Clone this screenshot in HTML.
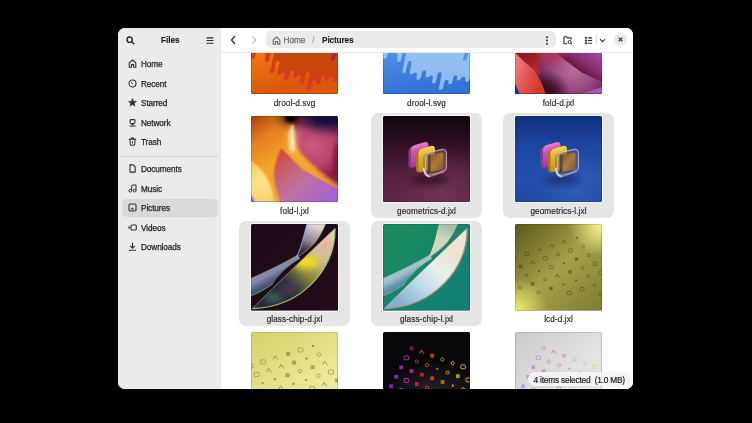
<!DOCTYPE html>
<html><head><meta charset="utf-8">
<style>
html,body{margin:0;padding:0;width:752px;height:423px;background:#000;overflow:hidden}
body{font-family:"Liberation Sans",sans-serif;color:#2e2e32;position:relative}
.win{will-change:transform;position:absolute;left:118px;top:28px;width:515px;height:360.8px;border-radius:7px;overflow:hidden;background:#fff}
.side{position:absolute;left:0;top:0;width:103px;height:100%;background:#ebebed}
.content{position:absolute;left:103px;top:0;width:412px;height:100%;background:#fff;overflow:hidden}
.abs{position:absolute}
.t{position:absolute;white-space:nowrap;font-size:8px;line-height:10px}
.si{position:absolute;left:0;width:103px;height:19px}
.si svg{position:absolute;left:10.2px;top:5.2px}
.si span{position:absolute;left:23px;top:6.2px;font-size:8.2px;line-height:10px;color:#242428;-webkit-text-stroke:0.25px #242428;letter-spacing:-0.08px}
.hdr{position:absolute;left:0;top:0;width:412px;height:24px;background:#fff;border-bottom:1px solid #e6e6e6;z-index:5}
.sel{position:absolute;width:111px;height:105.2px;background:#e5e5e5;border-radius:7px}
.thumb{position:absolute;width:87px;height:86.5px;overflow:hidden;border-radius:1.5px;box-shadow:0 0 0 1px rgba(255,255,255,0.6)}
.thumb::after{content:"";position:absolute;left:0;top:0;right:0;bottom:0;border-radius:1.5px;box-shadow:inset 0 0 0 0.6px rgba(0,0,0,0.25)}
.thumb svg{display:block;width:87px;height:86.5px}
.lbl{position:absolute;width:120px;text-align:center;font-size:8.2px;letter-spacing:0.1px;line-height:10px;color:#242428;-webkit-text-stroke:0.15px #242428;white-space:nowrap}
</style></head><body>
<div class="win">
  <div class="side">
    <svg class="abs" style="left:7.8px;top:7.8px" width="9" height="9" viewBox="0 0 9 9"><circle cx="3.7" cy="3.7" r="2.7" fill="none" stroke="#242428" stroke-width="1.35"/><path d="M5.7 5.7L7.8 7.8" stroke="#242428" stroke-width="1.4" stroke-linecap="round"/></svg>
    <div class="t" style="left:43px;top:7.6px;font-weight:700;font-size:8.2px;color:#202024;-webkit-text-stroke:0.15px #202024">Files</div>
    <svg class="abs" style="left:87.8px;top:8.6px" width="8" height="7" viewBox="0 0 8 7"><path d="M0.6 0.8H7.4M0.6 3.5H7.4M0.6 6.2H7.4" stroke="#242428" stroke-width="1.15"/></svg>

    <div class="si" style="top:26px"><svg width="9" height="9" viewBox="0 0 9 9"><path d="M1.2 8.2V3.8L4.5 1L7.8 3.8V8.2H5.6V5.6H3.4V8.2Z" fill="none" stroke="#2e2e32" stroke-width="1.1" stroke-linejoin="round"/></svg><span>Home</span></div>
    <div class="si" style="top:45.5px"><svg width="9" height="9" viewBox="0 0 9 9"><circle cx="4.5" cy="4.5" r="3.5" fill="none" stroke="#2e2e32" stroke-width="1.1"/><path d="M4.6 4.7L3.1 3.3" fill="none" stroke="#2e2e32" stroke-width="1" stroke-linecap="round"/></svg><span>Recent</span></div>
    <div class="si" style="top:65px"><svg width="9" height="9" viewBox="0 0 9 9"><path d="M4.50 0.35 L5.59 3.25 L8.68 3.39 L6.26 5.32 L7.09 8.31 L4.50 6.60 L1.91 8.31 L2.74 5.32 L0.32 3.39 L3.41 3.25Z" fill="#2e2e32" stroke="#2e2e32" stroke-width="0.4" stroke-linejoin="round"/></svg><span>Starred</span></div>
    <div class="si" style="top:84.5px"><svg width="9" height="9" viewBox="0 0 9 9"><rect x="2.1" y="1.6" width="4.8" height="3.9" rx="0.9" fill="none" stroke="#2e2e32" stroke-width="1.1"/><path d="M3.6 5.6L3.2 7.3H5.8L5.4 5.6Z" fill="#2e2e32"/><path d="M1.4 8.1H7.6" stroke="#2e2e32" stroke-width="1"/></svg><span>Network</span></div>
    <div class="si" style="top:104px"><svg width="9" height="9" viewBox="0 0 9 9"><path d="M0.8 2.3H8.2M3.3 2.2V1.1H5.7V2.2M1.9 2.6L2.3 7.4Q2.4 8.3 3.3 8.3H5.7Q6.6 8.3 6.7 7.4L7.1 2.6M4.5 4.2V6.6" fill="none" stroke="#2e2e32" stroke-width="1.05" stroke-linejoin="round"/></svg><span>Trash</span></div>
    <div class="abs" style="left:3px;top:127.5px;width:97px;height:1px;background:#d8d8da"></div>
    <div class="si" style="top:131px"><svg width="9" height="9" viewBox="0 0 9 9"><path d="M2 0.9H5.3L7.2 2.8V8.1H2Z" fill="none" stroke="#2e2e32" stroke-width="1.1" stroke-linejoin="round"/></svg><span>Documents</span></div>
    <div class="si" style="top:150.5px"><svg width="9" height="9" viewBox="0 0 9 9"><circle cx="2.3" cy="6.6" r="1.4" fill="none" stroke="#2e2e32" stroke-width="1"/><circle cx="6.6" cy="6.6" r="1.4" fill="none" stroke="#2e2e32" stroke-width="1"/><path d="M3.7 6.6V1.2L8 0.9V6.6" fill="none" stroke="#2e2e32" stroke-width="1"/></svg><span>Music</span></div>
    <div class="abs" style="left:4px;top:170.5px;width:96px;height:18.5px;background:#d9d9db;border-radius:5px"></div>
    <div class="si" style="top:170px"><svg width="9" height="9" viewBox="0 0 9 9"><rect x="1" y="1" width="7" height="7" rx="1.2" fill="none" stroke="#2e2e32" stroke-width="1.1"/><path d="M2.6 6.4L4.2 4.6L6.4 6.4Z" fill="#2e2e32"/></svg><span>Pictures</span></div>
    <div class="si" style="top:189.5px"><svg width="9" height="9" viewBox="0 0 9 9"><path d="M0.5 2.8L2.3 4.5L0.5 6.2Z" fill="#2e2e32"/><rect x="3" y="2" width="5.3" height="5" rx="1" fill="none" stroke="#2e2e32" stroke-width="1.1"/></svg><span>Videos</span></div>
    <div class="si" style="top:209px"><svg width="9" height="9" viewBox="0 0 9 9"><path d="M4.5 0.6V6M2.2 3.8L4.5 6.1L6.8 3.8M1 8.2H8" fill="none" stroke="#2e2e32" stroke-width="1.1"/></svg><span>Downloads</span></div>
  </div>
  <div class="content">
    <div class="hdr">
      <div class="abs" style="left:44.5px;top:3.3px;width:290px;height:17.2px;background:#ebebeb;border-radius:5px"></div>
      <div class="t" style="left:62.5px;top:7.6px;font-size:8.2px;color:#6a6a6e;-webkit-text-stroke:0.25px #6a6a6e">Home</div>
      <div class="t" style="left:91.3px;top:7.6px;font-size:8.2px;color:#8a8a8d">/</div>
      <div class="t" style="left:101px;top:7.4px;font-weight:700;font-size:8.3px;letter-spacing:-0.15px;color:#202024;-webkit-text-stroke:0.1px #202024">Pictures</div>
      <svg class="abs" style="left:9px;top:7px" width="7" height="10" viewBox="0 0 7 10"><path d="M5 1L1.5 5L5 9" fill="none" stroke="#2e2e32" stroke-width="1.3"/></svg>
      <svg class="abs" style="left:30px;top:7px" width="7" height="10" viewBox="0 0 7 10"><path d="M1.5 1.5L4.8 5L1.5 8.5" fill="none" stroke="#9a9a9d" stroke-width="1"/></svg>
      <svg class="abs" style="left:51px;top:7.5px" width="9" height="9" viewBox="0 0 9 9"><path d="M1.2 8.2V3.8L4.5 1L7.8 3.8V8.2H5.6V5.6H3.4V8.2Z" fill="none" stroke="#6a6a6e" stroke-width="1.1" stroke-linejoin="round"/></svg>
      <svg class="abs" style="left:324px;top:8px" width="4" height="9" viewBox="0 0 4 9"><circle cx="2" cy="1.2" r="1" fill="#2e2e32"/><circle cx="2" cy="4.5" r="1" fill="#2e2e32"/><circle cx="2" cy="7.8" r="1" fill="#2e2e32"/></svg>
      <svg class="abs" style="left:342px;top:8px" width="10" height="9" viewBox="0 0 10 9"><path d="M4.2 7.8H1.6Q0.9 7.8 0.9 7.1V1.5Q0.9 0.8 1.6 0.8H3.6L4.6 1.9H7.6Q8.3 1.9 8.3 2.6V3.6" fill="none" stroke="#2e2e32" stroke-width="1.1"/><circle cx="6.6" cy="6" r="1.5" fill="none" stroke="#2e2e32" stroke-width="1"/><path d="M7.7 7.1L8.9 8.3" stroke="#2e2e32" stroke-width="1.1"/></svg>
      <svg class="abs" style="left:363px;top:8px" width="9" height="9" viewBox="0 0 9 9"><rect x="0.9" y="0.9" width="1.9" height="1.9" rx="0.5" fill="#242428"/><rect x="0.9" y="3.6" width="1.9" height="1.9" rx="0.5" fill="#242428"/><rect x="0.9" y="6.3" width="1.9" height="1.9" rx="0.5" fill="#242428"/><path d="M3.9 1.85H8.1M3.9 4.55H8.1M3.9 7.25H8.1" stroke="#242428" stroke-width="1.05"/></svg>
      <div class="abs" style="left:374.9px;top:6.6px;width:1px;height:10.8px;background:#dcdcdc"></div>
      <svg class="abs" style="left:377.9px;top:9.8px" width="7" height="5" viewBox="0 0 7 5"><path d="M1 1.2L3.5 3.7L6 1.2" fill="none" stroke="#2e2e32" stroke-width="1.1"/></svg>
      <div class="abs" style="left:393.1px;top:5.4px;width:12.6px;height:12.6px;border-radius:50%;background:#ebebeb"></div>
      <svg class="abs" style="left:397px;top:9.3px" width="5" height="5" viewBox="0 0 5 5"><path d="M0.6 0.6L4.4 4.4M4.4 0.6L0.6 4.4" stroke="#2e2e32" stroke-width="1.2"/></svg>
    </div>
    <div id="grid" class="abs" style="left:0;top:0;width:412px;height:360px">
<div class="thumb" style="left:30px;top:-20.30px"><svg viewBox="0 0 87 87" preserveAspectRatio="none"><defs><linearGradient id="ab" gradientUnits="userSpaceOnUse" x1="0" y1="45" x2="10" y2="87"><stop offset="0" stop-color="#f27812"/><stop offset="1" stop-color="#d9580a"/></linearGradient><linearGradient id="at" gradientUnits="userSpaceOnUse" x1="0" y1="40" x2="0" y2="84"><stop offset="0" stop-color="#c44808"/><stop offset="0.4" stop-color="#c8460a"/><stop offset="0.7" stop-color="#d03c14"/><stop offset="1" stop-color="#dc3420"/></linearGradient><filter id="atb" x="-100%" y="-100%" width="300%" height="300%"><feGaussianBlur stdDeviation="0.9"/></filter></defs><rect width="87" height="87" fill="url(#ab)"/><g transform="skewX(-11.31)"><path d="M-20,-10 L-20,49 L9.60,49.00 A2.00,2.00 0 0 0 13.60,49.00 L17.30,32.20 A2.20,2.20 0 0 1 21.70,32.20 L24.75,52.35 A1.85,1.85 0 0 0 28.45,52.35 L28.55,46.55 A1.75,1.75 0 0 1 32.05,46.55 L32.05,63.65 A1.75,1.75 0 0 0 35.55,63.65 L35.70,54.90 A1.90,1.90 0 0 1 39.50,54.90 L39.75,64.85 A1.85,1.85 0 0 0 43.45,64.85 L43.45,66.65 A1.85,1.85 0 0 1 47.15,66.65 L47.45,70.15 A2.15,2.15 0 0 0 51.75,70.15 L51.90,65.00 A2.10,2.10 0 0 1 56.10,65.00 L56.35,67.95 A1.85,1.85 0 0 0 60.05,67.95 L60.05,69.75 A1.85,1.85 0 0 1 63.75,69.75 L63.90,74.00 A2.00,2.00 0 0 0 67.90,74.00 L67.90,66.50 A2.00,2.00 0 0 1 71.90,66.50 L72.05,80.25 A2.05,2.05 0 0 0 76.15,80.25 L76.15,74.35 A2.05,2.05 0 0 1 80.25,74.35 L80.35,74.75 A1.95,1.95 0 0 0 84.25,74.75 L84.30,69.80 A1.90,1.90 0 0 1 88.10,69.80 L88.10,71.10 A1.90,1.90 0 0 0 91.90,71.10 L92.25,71.35 A2.15,2.15 0 0 1 96.55,71.35 L96.55,72.05 A2.15,2.15 0 0 0 100.85,72.05 L101.00,62.00 A2.00,2.00 0 0 1 105.00,62.00 L130,60 L130,-10 Z" fill="url(#at)"/><line x1="95.5" y1="20" x2="92" y2="51.3" stroke="#a8283a" stroke-width="3.6" stroke-linecap="round"/><rect x="9.75" y="44.00" width="3.70" height="6.80" rx="1.85" fill="#e03424" fill-opacity="0.8" filter="url(#atb)"/><rect x="24.90" y="47.35" width="3.40" height="6.65" rx="1.70" fill="#e03424" fill-opacity="0.8" filter="url(#atb)"/><rect x="32.20" y="58.65" width="3.20" height="6.55" rx="1.60" fill="#e03424" fill-opacity="0.8" filter="url(#atb)"/><rect x="39.90" y="59.85" width="3.40" height="6.65" rx="1.70" fill="#e03424" fill-opacity="0.8" filter="url(#atb)"/><rect x="47.60" y="65.15" width="4.00" height="6.95" rx="2.00" fill="#e03424" fill-opacity="0.8" filter="url(#atb)"/><rect x="56.50" y="62.95" width="3.40" height="6.65" rx="1.70" fill="#e03424" fill-opacity="0.8" filter="url(#atb)"/><rect x="64.05" y="69.00" width="3.70" height="6.80" rx="1.85" fill="#e03424" fill-opacity="0.8" filter="url(#atb)"/><rect x="72.20" y="75.25" width="3.80" height="6.85" rx="1.90" fill="#e03424" fill-opacity="0.8" filter="url(#atb)"/><rect x="80.50" y="69.75" width="3.60" height="6.75" rx="1.80" fill="#e03424" fill-opacity="0.8" filter="url(#atb)"/><rect x="88.25" y="66.10" width="3.50" height="6.70" rx="1.75" fill="#e03424" fill-opacity="0.8" filter="url(#atb)"/><rect x="96.70" y="67.05" width="4.00" height="6.95" rx="2.00" fill="#e03424" fill-opacity="0.8" filter="url(#atb)"/></g><rect x="0" y="86" width="87" height="1" fill="#c84a0a"/></svg></div>
<div class="lbl" style="left:13.5px;top:70.50px">drool-d.svg</div>
<div class="thumb" style="left:162px;top:-20.30px"><svg viewBox="0 0 87 87" preserveAspectRatio="none"><defs><linearGradient id="bb" gradientUnits="userSpaceOnUse" x1="0" y1="45" x2="10" y2="87"><stop offset="0" stop-color="#4f8fe4"/><stop offset="1" stop-color="#3474d8"/></linearGradient><linearGradient id="bt" gradientUnits="userSpaceOnUse" x1="0" y1="40" x2="0" y2="84"><stop offset="0" stop-color="#96c2f4"/><stop offset="1" stop-color="#8ab6f0"/></linearGradient></defs><rect width="87" height="87" fill="url(#bb)"/><g transform="skewX(-11.31)"><path d="M-20,-10 L-20,49 L9.60,49.00 A2.00,2.00 0 0 0 13.60,49.00 L17.30,32.20 A2.20,2.20 0 0 1 21.70,32.20 L24.75,52.35 A1.85,1.85 0 0 0 28.45,52.35 L28.55,46.55 A1.75,1.75 0 0 1 32.05,46.55 L32.05,63.65 A1.75,1.75 0 0 0 35.55,63.65 L35.70,54.90 A1.90,1.90 0 0 1 39.50,54.90 L39.75,64.85 A1.85,1.85 0 0 0 43.45,64.85 L43.45,66.65 A1.85,1.85 0 0 1 47.15,66.65 L47.45,70.15 A2.15,2.15 0 0 0 51.75,70.15 L51.90,65.00 A2.10,2.10 0 0 1 56.10,65.00 L56.35,67.95 A1.85,1.85 0 0 0 60.05,67.95 L60.05,69.75 A1.85,1.85 0 0 1 63.75,69.75 L63.90,74.00 A2.00,2.00 0 0 0 67.90,74.00 L67.90,66.50 A2.00,2.00 0 0 1 71.90,66.50 L72.05,80.25 A2.05,2.05 0 0 0 76.15,80.25 L76.15,74.35 A2.05,2.05 0 0 1 80.25,74.35 L80.35,74.75 A1.95,1.95 0 0 0 84.25,74.75 L84.30,69.80 A1.90,1.90 0 0 1 88.10,69.80 L88.10,71.10 A1.90,1.90 0 0 0 91.90,71.10 L92.25,71.35 A2.15,2.15 0 0 1 96.55,71.35 L96.55,72.05 A2.15,2.15 0 0 0 100.85,72.05 L101.00,62.00 A2.00,2.00 0 0 1 105.00,62.00 L130,60 L130,-10 Z" fill="url(#bt)"/><line x1="95.5" y1="20" x2="92" y2="51.3" stroke="#5a96e6" stroke-width="3.6" stroke-linecap="round"/></g><rect x="0" y="86" width="87" height="1" fill="#2a62c8"/></svg></div>
<div class="lbl" style="left:145.5px;top:70.50px">drool-l.svg</div>
<div class="thumb" style="left:294px;top:-20.30px"><svg viewBox="0 0 87 87" preserveAspectRatio="none"><defs>
<filter id="fdb" x="-20%" y="-20%" width="140%" height="140%"><feGaussianBlur stdDeviation="0.7"/></filter>
<filter id="fdb2" x="-50%" y="-50%" width="200%" height="200%"><feGaussianBlur stdDeviation="2.5"/></filter>
<radialGradient id="fdm" gradientUnits="userSpaceOnUse" cx="58" cy="62" r="36"><stop offset="0" stop-color="#b87098"/><stop offset="0.55" stop-color="#9c4c84"/><stop offset="1" stop-color="#702860"/></radialGradient>
<radialGradient id="fdsh" gradientUnits="userSpaceOnUse" cx="30" cy="88" r="26"><stop offset="0" stop-color="#1a0410" stop-opacity="1"/><stop offset="0.5" stop-color="#3a0c24" stop-opacity="0.8"/><stop offset="1" stop-color="#3a0c24" stop-opacity="0"/></radialGradient>
<linearGradient id="fdtr" gradientUnits="userSpaceOnUse" x1="58" y1="62" x2="75" y2="38"><stop offset="0" stop-color="#5a1030"/><stop offset="0.45" stop-color="#8a3070"/><stop offset="1" stop-color="#9c4ca8"/></linearGradient>
<linearGradient id="fdl" gradientUnits="userSpaceOnUse" x1="0" y1="60" x2="28" y2="70"><stop offset="0" stop-color="#f07880"/><stop offset="0.45" stop-color="#e05850"/><stop offset="1" stop-color="#d03a2c"/></linearGradient>
<linearGradient id="fdtl" gradientUnits="userSpaceOnUse" x1="5" y1="45" x2="22" y2="62"><stop offset="0" stop-color="#8a1420"/><stop offset="1" stop-color="#b02a30"/></linearGradient>
</defs>
<rect width="87" height="87" fill="#a04a80"/>
<g filter="url(#fdb)">
<rect x="-5" y="-5" width="97" height="97" fill="url(#fdm)"/>
<ellipse cx="33" cy="48" rx="13" ry="9" fill="#b83050" opacity="0.65" filter="url(#fdb2)"/><rect x="-5" y="-5" width="97" height="97" fill="url(#fdsh)"/>
<path d="M22,44 Q24,52 23,60" fill="none" stroke="#d04050" stroke-width="2" opacity="0.6" filter="url(#fdb2)"/>
<path d="M92,90 L55,90 Q72,84 92,78 Z" fill="#a456c0"/>
<path d="M40.75,-5 L40.75,44.8 Q47,50 53.25,54.8 T67,64.8 Q78,70 92,76.5 L92,-5 Z" fill="url(#fdtr)"/>
<ellipse cx="45" cy="46" rx="6" ry="3" fill="#c83060" opacity="0.7" filter="url(#fdb2)"/>
<path d="M-5,-5 L-5,44 L0.6,45.4 Q9.6,55 19.2,62.5 L25,68 Q23.5,55 23,30 L23,-5 Z" fill="url(#fdtl)"/>
<path d="M-5,44 L0.6,45.4 Q9.6,55 19.2,62.5 Q25.6,71 31,87 L-5,87 Z" fill="url(#fdl)"/>
<path d="M-5,74 L0,76 Q3,82 6,90 L-5,90 Z" fill="#2420c8"/>
<rect x="0" y="86" width="87" height="1" fill="#5a1040" opacity="0.6"/>
</g></svg></div>
<div class="lbl" style="left:277.5px;top:70.50px">fold-d.jxl</div>
<div class="thumb" style="left:30px;top:87.90px"><svg viewBox="0 0 87 87" preserveAspectRatio="none"><defs>
<filter id="flb" x="-20%" y="-20%" width="140%" height="140%"><feGaussianBlur stdDeviation="0.8"/></filter>
<filter id="flb2" x="-50%" y="-50%" width="200%" height="200%"><feGaussianBlur stdDeviation="1.6"/></filter>
<filter id="flb3" x="-80%" y="-80%" width="260%" height="260%"><feGaussianBlur stdDeviation="5"/></filter>
<linearGradient id="flo" gradientUnits="userSpaceOnUse" x1="2" y1="0" x2="30" y2="45"><stop offset="0" stop-color="#a8440e"/><stop offset="0.45" stop-color="#e68020"/><stop offset="1" stop-color="#f4a62a"/></linearGradient>
<radialGradient id="flm" gradientUnits="userSpaceOnUse" cx="62" cy="30" r="34"><stop offset="0" stop-color="#cc5a82"/><stop offset="0.6" stop-color="#b8446c"/><stop offset="1" stop-color="#8a2040"/></radialGradient>
<linearGradient id="flf" gradientUnits="userSpaceOnUse" x1="26" y1="36" x2="70" y2="88"><stop offset="0" stop-color="#d04838"/><stop offset="0.3" stop-color="#c86070"/><stop offset="0.6" stop-color="#c070a0"/><stop offset="1" stop-color="#a464d0"/></linearGradient>
<linearGradient id="fly" gradientUnits="userSpaceOnUse" x1="0" y1="45" x2="15" y2="85"><stop offset="0" stop-color="#f8c858"/><stop offset="0.5" stop-color="#fce28a"/><stop offset="1" stop-color="#fad070"/></linearGradient>
<linearGradient id="flband" gradientUnits="userSpaceOnUse" x1="40" y1="30" x2="80" y2="70"><stop offset="0" stop-color="#f8b438"/><stop offset="0.6" stop-color="#f4a030"/><stop offset="1" stop-color="#e88030"/></linearGradient>
</defs>
<rect width="87" height="87" fill="url(#flo)"/>
<g filter="url(#flb)">
<path d="M36,15 C40,35 46,45 55,52 C65,60 78,68 92,76 L92,60 C70,50 55,40 36,15 Z" fill="url(#flband)"/>
<path d="M42,-5 L42.5,10 C43.5,25 46,34 52,40 C62,50 75,62 92,72 L92,-5 Z" fill="url(#flm)" filter="url(#flb2)"/>
<ellipse cx="76" cy="3" rx="24" ry="11" fill="#161040" filter="url(#flb3)"/>
<ellipse cx="86" cy="45" rx="4" ry="18" fill="#801030" opacity="0.7" filter="url(#flb2)"/>
<ellipse cx="41" cy="2" rx="12" ry="6" fill="#1a0c18" filter="url(#flb3)"/><ellipse cx="40" cy="3" rx="6" ry="4" fill="#0c0610" filter="url(#flb2)"/>
<ellipse cx="42" cy="22" rx="3.5" ry="12" fill="#f8c878" opacity="0.7" filter="url(#flb3)"/><ellipse cx="41" cy="24" rx="2.3" ry="13" fill="#fff0c0" filter="url(#flb2)"/>
<path d="M41.8,9 C40.5,18 40.5,26 42,34" fill="none" stroke="#fffbe8" stroke-width="1.2" opacity="0.85"/>
<path d="M-5,44 L0.8,45.5 C9,51 16,60 19.5,70 C21.5,76 22.5,82 24,92 L-5,92 Z" fill="url(#fly)"/>
<path d="M30.3,32.2 C27,38 23,50 22.9,57 C23,66 25,75 31.3,92 L92,92 L92,75 C75,68 60,58 52.8,54.6 C45,48 38,40 30.3,32.2 Z" fill="url(#flf)"/>
<path d="M-5,76 C0,78 3,82 5,92 L-5,92 Z" fill="#8848d8"/>
<rect x="0" y="86" width="87" height="1" fill="#9050c0" opacity="0.5"/>
</g></svg></div>
<div class="lbl" style="left:13.5px;top:178.70px">fold-l.jxl</div>
<div class="sel" style="left:150px;top:84.60px"></div>
<div class="thumb" style="left:162px;top:87.90px"><svg viewBox="0 0 87 87" preserveAspectRatio="none"><defs>
<linearGradient id="gdbg" x1="0" y1="0" x2="0" y2="1"><stop offset="0" stop-color="#120610"/><stop offset="0.3" stop-color="#2e0e22"/><stop offset="0.65" stop-color="#52203e"/><stop offset="1" stop-color="#62284a"/></linearGradient>
<radialGradient id="gdgl" gradientUnits="userSpaceOnUse" cx="60" cy="75" r="45"><stop offset="0" stop-color="#8a4a6a" stop-opacity="0.35"/><stop offset="1" stop-color="#8a4a6a" stop-opacity="0"/></radialGradient>
<filter id="gdb1" x="-50%" y="-50%" width="200%" height="200%"><feGaussianBlur stdDeviation="3"/></filter>
<filter id="gdb0" x="-20%" y="-20%" width="140%" height="140%"><feGaussianBlur stdDeviation="0.5"/></filter>
<linearGradient id="gdpk" x1="0" y1="0" x2="0" y2="1"><stop offset="0" stop-color="#ec80cc"/><stop offset="0.3" stop-color="#cc54ac"/><stop offset="1" stop-color="#a83c90"/></linearGradient>
<linearGradient id="gdyl" x1="0" y1="0" x2="0" y2="1"><stop offset="0" stop-color="#f2d850"/><stop offset="0.3" stop-color="#e0b82e"/><stop offset="1" stop-color="#c09420"/></linearGradient>
<linearGradient id="gdgs" x1="0" y1="0" x2="1" y2="1"><stop offset="0" stop-color="#7a5030"/><stop offset="0.5" stop-color="#b08030"/><stop offset="1" stop-color="#8a5a30"/></linearGradient>
</defs>
<rect width="87" height="87" fill="url(#gdbg)"/>
<rect width="87" height="87" fill="url(#gdgl)"/>
<ellipse cx="47" cy="64" rx="18" ry="5" fill="#1a0610" opacity="0.55" filter="url(#gdb1)"/>
<g filter="url(#gdb0)">
<g transform="translate(25.5,31.5) skewY(-17)"><rect width="19.5" height="22" rx="4.5" fill="#8a3890"/></g>
<g transform="translate(28,30.5) skewY(-17)"><rect width="17.5" height="22" rx="4" fill="url(#gdpk)"/></g>
<g transform="translate(33,35) skewY(-17)"><rect width="18.5" height="23" rx="4.5" fill="#a87818"/></g>
<g transform="translate(35.5,34) skewY(-17)"><rect width="16.5" height="23" rx="4" fill="url(#gdyl)"/></g>
<g transform="translate(40,38) skewY(-13)"><rect width="23" height="24" rx="5" fill="#6a4a50" opacity="0.35"/></g>
<g transform="translate(42,37) skewY(-13)"><rect x="0.6" y="0.6" width="20.8" height="23" rx="4.5" fill="#8a6070" fill-opacity="0.35" stroke="#f0d8d0" stroke-width="1.3" stroke-opacity="0.6"/>
<rect x="4.5" y="3.5" width="14" height="17" rx="2.5" fill="url(#gdgs)" opacity="0.9"/><rect x="3" y="3" width="2.5" height="17.5" rx="1" fill="#2a1a20" opacity="0.5"/></g>
<path d="M40.5,52 Q41.5,60.5 46.5,61" fill="none" stroke="#fff4e8" stroke-width="1.5" opacity="0.85"/>
<path d="M46,61.5 Q54,60 61,54" fill="none" stroke="#f0b090" stroke-width="1" opacity="0.6"/>
</g></svg></div>
<div class="lbl" style="left:145.5px;top:178.70px">geometrics-d.jxl</div>
<div class="sel" style="left:282px;top:84.60px"></div>
<div class="thumb" style="left:294px;top:87.90px"><svg viewBox="0 0 87 87" preserveAspectRatio="none"><defs>
<linearGradient id="glbg" x1="0" y1="0" x2="0" y2="1"><stop offset="0" stop-color="#12307e"/><stop offset="0.35" stop-color="#1c46a0"/><stop offset="0.7" stop-color="#2250aa"/><stop offset="1" stop-color="#1e48a2"/></linearGradient>
<radialGradient id="glgl" gradientUnits="userSpaceOnUse" cx="60" cy="75" r="45"><stop offset="0" stop-color="#4a7ad0" stop-opacity="0.35"/><stop offset="1" stop-color="#4a7ad0" stop-opacity="0"/></radialGradient>
<filter id="glb1" x="-50%" y="-50%" width="200%" height="200%"><feGaussianBlur stdDeviation="3"/></filter>
<filter id="glb0" x="-20%" y="-20%" width="140%" height="140%"><feGaussianBlur stdDeviation="0.5"/></filter>
<linearGradient id="glpk" x1="0" y1="0" x2="0" y2="1"><stop offset="0" stop-color="#ec80cc"/><stop offset="0.3" stop-color="#cc54ac"/><stop offset="1" stop-color="#a83c90"/></linearGradient>
<linearGradient id="glyl" x1="0" y1="0" x2="0" y2="1"><stop offset="0" stop-color="#f2d850"/><stop offset="0.3" stop-color="#e0b82e"/><stop offset="1" stop-color="#c09420"/></linearGradient>
<linearGradient id="glgs" x1="0" y1="0" x2="1" y2="1"><stop offset="0" stop-color="#7a5030"/><stop offset="0.5" stop-color="#b08030"/><stop offset="1" stop-color="#8a5a30"/></linearGradient>
</defs>
<rect width="87" height="87" fill="url(#glbg)"/>
<rect width="87" height="87" fill="url(#glgl)"/>
<ellipse cx="47" cy="64" rx="18" ry="5" fill="#081850" opacity="0.55" filter="url(#glb1)"/>
<g filter="url(#glb0)">
<g transform="translate(25.5,31.5) skewY(-17)"><rect width="19.5" height="22" rx="4.5" fill="#8a3890"/></g>
<g transform="translate(28,30.5) skewY(-17)"><rect width="17.5" height="22" rx="4" fill="url(#glpk)"/></g>
<g transform="translate(33,35) skewY(-17)"><rect width="18.5" height="23" rx="4.5" fill="#a87818"/></g>
<g transform="translate(35.5,34) skewY(-17)"><rect width="16.5" height="23" rx="4" fill="url(#glyl)"/></g>
<g transform="translate(40,38) skewY(-13)"><rect width="23" height="24" rx="5" fill="#6a4a50" opacity="0.35"/></g>
<g transform="translate(42,37) skewY(-13)"><rect x="0.6" y="0.6" width="20.8" height="23" rx="4.5" fill="#4060b0" fill-opacity="0.35" stroke="#f0d8d0" stroke-width="1.3" stroke-opacity="0.6"/>
<rect x="4.5" y="3.5" width="14" height="17" rx="2.5" fill="url(#glgs)" opacity="0.9"/><rect x="3" y="3" width="2.5" height="17.5" rx="1" fill="#2a1a20" opacity="0.5"/></g>
<path d="M40.5,52 Q41.5,60.5 46.5,61" fill="none" stroke="#fff4e8" stroke-width="1.5" opacity="0.85"/>
<path d="M46,61.5 Q54,60 61,54" fill="none" stroke="#f0b090" stroke-width="1" opacity="0.6"/>
</g></svg></div>
<div class="lbl" style="left:277.5px;top:178.70px">geometrics-l.jxl</div>
<div class="sel" style="left:18px;top:192.80px"></div>
<div class="thumb" style="left:30px;top:196.10px"><svg viewBox="0 0 87 87" preserveAspectRatio="none"><defs>
<linearGradient id="cdbg" x1="0" y1="0" x2="1" y2="1"><stop offset="0" stop-color="#1c0a18" stop-opacity="1"/><stop offset="1" stop-color="#240c1a" stop-opacity="1"/></linearGradient>
<linearGradient id="cdtl" gradientUnits="userSpaceOnUse" x1="62" y1="2" x2="50" y2="32"><stop offset="0" stop-color="#e8dce0" stop-opacity="0.95"/><stop offset="0.5" stop-color="#b0a8c0" stop-opacity="0.75"/><stop offset="1" stop-color="#403850" stop-opacity="0.3"/></linearGradient>
<linearGradient id="cdbl" gradientUnits="userSpaceOnUse" x1="10" y1="55" x2="18" y2="70"><stop offset="0" stop-color="#9098b8" stop-opacity="0.9"/><stop offset="0.4" stop-color="#5a6890" stop-opacity="0.85"/><stop offset="1" stop-color="#34426a" stop-opacity="0.8"/></linearGradient>
<linearGradient id="cdfr" gradientUnits="userSpaceOnUse" x1="15" y1="78" x2="80" y2="12"><stop offset="0" stop-color="#303a58" stop-opacity="0.55"/><stop offset="0.3" stop-color="#3a4a60" stop-opacity="0.6"/><stop offset="0.5" stop-color="#a0a040" stop-opacity="0.8"/><stop offset="0.75" stop-color="#e0d0a8" stop-opacity="0.9"/><stop offset="1" stop-color="#f0d8d0" stop-opacity="0.95"/></linearGradient>
<clipPath id="cdc2"><path d="M1.4,85 C28,58 56,31 84,4.5 C85,46 49,84 1.4,85 Z"/></clipPath>
<filter id="cdf" x="-20%" y="-20%" width="140%" height="140%"><feGaussianBlur stdDeviation="0.45"/></filter>
<filter id="cdg" x="-50%" y="-50%" width="200%" height="200%"><feGaussianBlur stdDeviation="3.5"/></filter>
</defs>
<rect width="87" height="87" fill="url(#cdbg)"/>
<g filter="url(#cdf)">
<path d="M56.5,-2 C53,10 51,24 45,34 C52,30 62,22 66,16 C70,10 73,4 75.5,-2 Z" fill="url(#cdtl)"/>' + (f'<path d="M56.5,-2 C53,10 51,24 45,34" fill="none" stroke="#80b0e8" stroke-width="1.2" stroke-opacity="0.8"/>' if top_left_edge else '') + f'
<path d="M75.5,-2 C73,4 70,10 66,16 C62,22 52,30 45,34" fill="none" stroke="#80c050" stroke-width="0.9" stroke-opacity="0.8"/>
<path d="M-2,55.5 C15,48 32,40 47,31 L49,35 C40,40 30,48 22,60 C14,66 6,70 -2,73 Z" fill="url(#cdbl)"/>
<path d="M-2,55.5 C15,48 32,40 47,31" fill="none" stroke="#80c050" stroke-width="0.8" stroke-opacity="0.5"/>
<path d="M-2,73 C6,70 14,66 22,60" fill="none" stroke="#80c050" stroke-width="0.9" stroke-opacity="0.8"/>
<path d="M1.4,85 C28,58 56,31 84,4.5 C85,46 49,84 1.4,85 Z" fill="url(#cdfr)"/>
<g clip-path="url(#cdc2)"><ellipse cx="55" cy="38" rx="13" ry="7" fill="#f8e818" opacity="0.9" filter="url(#cdg)"/><ellipse cx="75" cy="22" rx="5" ry="9" fill="#f0a878" opacity="0.7" filter="url(#cdg)"/><ellipse cx="22" cy="74" rx="9" ry="4" fill="#40a070" opacity="0.6" filter="url(#cdg)"/><ellipse cx="38" cy="66" rx="7" ry="3" fill="#a04060" opacity="0.5" filter="url(#cdg)"/></g>
<path d="M84,4.5 C85,46 49,84 1.4,85" fill="none" stroke="#98c058" stroke-width="1.3"/>
<path d="M1.4,85 C28,58 56,31 84,4.5" fill="none" stroke="#b0b888" stroke-width="0.7" stroke-opacity="0.8"/>
</g></svg></div>
<div class="lbl" style="left:13.5px;top:286.90px">glass-chip-d.jxl</div>
<div class="sel" style="left:150px;top:192.80px"></div>
<div class="thumb" style="left:162px;top:196.10px"><svg viewBox="0 0 87 87" preserveAspectRatio="none"><defs>
<linearGradient id="clbg" x1="0" y1="0" x2="1" y2="1"><stop offset="0" stop-color="#1a8c5a" stop-opacity="1"/><stop offset="1" stop-color="#127e78" stop-opacity="1"/></linearGradient>
<linearGradient id="cltl" gradientUnits="userSpaceOnUse" x1="62" y1="2" x2="50" y2="32"><stop offset="0" stop-color="#b8c8b8" stop-opacity="0.85"/><stop offset="0.4" stop-color="#e8e0c8" stop-opacity="0.9"/><stop offset="1" stop-color="#e8dcc8" stop-opacity="0.9"/></linearGradient>
<linearGradient id="clbl" gradientUnits="userSpaceOnUse" x1="10" y1="55" x2="18" y2="70"><stop offset="0" stop-color="#b0c8d0" stop-opacity="0.9"/><stop offset="0.4" stop-color="#6a98b8" stop-opacity="0.9"/><stop offset="1" stop-color="#3a7098" stop-opacity="0.85"/></linearGradient>
<linearGradient id="clfr" gradientUnits="userSpaceOnUse" x1="15" y1="78" x2="80" y2="12"><stop offset="0" stop-color="#90b0d0" stop-opacity="0.95"/><stop offset="0.3" stop-color="#c8e0f0" stop-opacity="0.95"/><stop offset="0.55" stop-color="#f0f4f0" stop-opacity="0.97"/><stop offset="0.8" stop-color="#f4e4d4" stop-opacity="0.97"/><stop offset="1" stop-color="#f8e8e0" stop-opacity="0.97"/></linearGradient>
<clipPath id="clc2"><path d="M1.4,85 C28,58 56,31 84,4.5 C85,46 49,84 1.4,85 Z"/></clipPath>
<filter id="clf" x="-20%" y="-20%" width="140%" height="140%"><feGaussianBlur stdDeviation="0.45"/></filter>
<filter id="clg" x="-50%" y="-50%" width="200%" height="200%"><feGaussianBlur stdDeviation="3.5"/></filter>
</defs>
<rect width="87" height="87" fill="url(#clbg)"/>
<g filter="url(#clf)">
<path d="M56.5,-2 C53,10 51,24 45,34 C52,30 62,22 66,16 C70,10 73,4 75.5,-2 Z" fill="url(#cltl)"/>' + (f'<path d="M56.5,-2 C53,10 51,24 45,34" fill="none" stroke="None" stroke-width="1.2" stroke-opacity="0.8"/>' if top_left_edge else '') + f'
<path d="M75.5,-2 C73,4 70,10 66,16 C62,22 52,30 45,34" fill="none" stroke="#c0a098" stroke-width="0.9" stroke-opacity="0.8"/>
<path d="M-2,55.5 C15,48 32,40 47,31 L49,35 C40,40 30,48 22,60 C14,66 6,70 -2,73 Z" fill="url(#clbl)"/>
<path d="M-2,55.5 C15,48 32,40 47,31" fill="none" stroke="#c0a098" stroke-width="0.8" stroke-opacity="0.5"/>
<path d="M-2,73 C6,70 14,66 22,60" fill="none" stroke="#c0a098" stroke-width="0.9" stroke-opacity="0.8"/>
<path d="M1.4,85 C28,58 56,31 84,4.5 C85,46 49,84 1.4,85 Z" fill="url(#clfr)"/>
<g clip-path="url(#clc2)"></g>
<path d="M84,4.5 C85,46 49,84 1.4,85" fill="none" stroke="#b89088" stroke-width="1.3"/>
<path d="M1.4,85 C28,58 56,31 84,4.5" fill="none" stroke="#d8c0b8" stroke-width="0.7" stroke-opacity="0.8"/>
</g></svg></div>
<div class="lbl" style="left:145.5px;top:286.90px">glass-chip-l.jxl</div>
<div class="thumb" style="left:294px;top:196.10px"><svg viewBox="0 0 87 87" preserveAspectRatio="none"><defs><filter id="ldf" x="-20%" y="-20%" width="140%" height="140%"><feGaussianBlur stdDeviation="0.35"/></filter><linearGradient id="ldg1" x1="0" y1="0" x2="1" y2="1"><stop offset="0" stop-color="#5a5818"/><stop offset="0.5" stop-color="#a4a04a"/><stop offset="1" stop-color="#7e7c30"/></linearGradient>
<radialGradient id="ldg2" cx="1" cy="0" r="0.38"><stop offset="0" stop-color="#fafa90"/><stop offset="1" stop-color="#fafa90" stop-opacity="0"/></radialGradient>
<radialGradient id="ldg3" cx="0" cy="1" r="0.38"><stop offset="0" stop-color="#f0f070"/><stop offset="1" stop-color="#f0f070" stop-opacity="0"/></radialGradient></defs><rect width="87" height="87" fill="url(#ldg1)"/><rect width="87" height="87" fill="url(#ldg2)"/><rect width="87" height="87" fill="url(#ldg3)"/><g filter="url(#ldf)" opacity="0.6"><circle cx="62.0" cy="14.0" r="1.0" fill="#343210"/><path d="M47.4,19.4 L49.2,16.3 L51.6,19.6" fill="none" stroke="#343210" stroke-width="0.8500000000000001"/><path d="M34.9,23.4 L36.7,20.3 L39.1,23.6" fill="none" stroke="#343210" stroke-width="0.8500000000000001"/><circle cx="24.5" cy="26.0" r="1.0" fill="#343210"/><rect x="9.9" y="28.3" width="4.1" height="3.4" rx="0.6" fill="none" stroke="#343210" stroke-width="0.65"/><rect x="-2.2" y="32.3" width="3.4" height="3.4" fill="#343210" opacity="0.8"/><circle cx="68.0" cy="22.7" r="1.5" fill="none" stroke="#343210" stroke-width="0.65"/><rect x="53.4" y="25.0" width="4.1" height="3.4" rx="0.6" fill="none" stroke="#343210" stroke-width="0.65"/><circle cx="43.0" cy="30.7" r="1.5" fill="none" stroke="#343210" stroke-width="0.65"/><rect x="28.4" y="33.0" width="4.1" height="3.4" rx="0.6" fill="none" stroke="#343210" stroke-width="0.65"/><path d="M15.9,40.1 L17.7,37.0 L20.1,40.3" fill="none" stroke="#343210" stroke-width="0.8500000000000001"/><rect x="3.8" y="41.0" width="3.4" height="3.4" fill="#343210" opacity="0.8"/><circle cx="74.0" cy="31.4" r="1.5" fill="none" stroke="#343210" stroke-width="0.65"/><rect x="59.8" y="33.7" width="3.4" height="3.4" fill="#343210" opacity="0.8"/><circle cx="49.0" cy="39.4" r="1.0" fill="#343210"/><rect x="34.4" y="41.7" width="4.1" height="3.4" rx="0.6" fill="none" stroke="#343210" stroke-width="0.65"/><circle cx="24.0" cy="47.4" r="1.0" fill="#343210"/><circle cx="11.5" cy="51.4" r="1.5" fill="none" stroke="#343210" stroke-width="0.65"/><rect x="77.9" y="38.4" width="4.1" height="3.4" rx="0.6" fill="none" stroke="#343210" stroke-width="0.65"/><circle cx="67.5" cy="44.1" r="1.5" fill="none" stroke="#343210" stroke-width="0.65"/><rect x="53.3" y="46.4" width="3.4" height="3.4" fill="#343210" opacity="0.8"/><path d="M40.4,53.5 L42.2,50.4 L44.6,53.7" fill="none" stroke="#343210" stroke-width="0.8500000000000001"/><circle cx="30.0" cy="56.1" r="1.5" fill="none" stroke="#343210" stroke-width="0.65"/><rect x="15.8" y="58.4" width="3.4" height="3.4" fill="#343210" opacity="0.8"/><circle cx="5.0" cy="64.1" r="1.5" fill="none" stroke="#343210" stroke-width="0.65"/><rect x="83.9" y="47.1" width="4.1" height="3.4" rx="0.6" fill="none" stroke="#343210" stroke-width="0.65"/><circle cx="73.5" cy="52.8" r="1.5" fill="none" stroke="#343210" stroke-width="0.65"/><circle cx="61.0" cy="56.8" r="1.0" fill="#343210"/><circle cx="48.5" cy="60.8" r="1.0" fill="#343210"/><rect x="34.3" y="63.1" width="3.4" height="3.4" fill="#343210" opacity="0.8"/><circle cx="23.5" cy="68.8" r="1.5" fill="none" stroke="#343210" stroke-width="0.65"/><circle cx="79.5" cy="61.5" r="1.5" fill="none" stroke="#343210" stroke-width="0.65"/><rect x="64.9" y="63.8" width="4.1" height="3.4" rx="0.6" fill="none" stroke="#343210" stroke-width="0.65"/><rect x="52.4" y="67.8" width="4.1" height="3.4" rx="0.6" fill="none" stroke="#343210" stroke-width="0.65"/><circle cx="85.5" cy="70.2" r="1.5" fill="none" stroke="#343210" stroke-width="0.65"/></g></svg></div>
<div class="lbl" style="left:277.5px;top:286.90px">lcd-d.jxl</div>
<div class="thumb" style="left:30px;top:304.30px"><svg viewBox="0 0 87 87" preserveAspectRatio="none"><defs><filter id="llf" x="-20%" y="-20%" width="140%" height="140%"><feGaussianBlur stdDeviation="0.35"/></filter><linearGradient id="llg1" x1="0" y1="0" x2="0.6" y2="1"><stop offset="0" stop-color="#d6d26a"/><stop offset="1" stop-color="#f2eea4"/></linearGradient></defs><rect width="87" height="87" fill="url(#llg1)"/><g filter="url(#llf)" opacity="0.6"><circle cx="62.0" cy="14.0" r="1.2" fill="#6a6420"/><rect x="47.1" y="16.0" width="4.9" height="4.1" rx="0.6" fill="none" stroke="#6a6420" stroke-width="0.75"/><rect x="35.0" y="20.0" width="4.1" height="4.1" fill="#6a6420" opacity="0.8"/><path d="M22.1,27.6 L24.1,24.0 L26.9,27.9" fill="none" stroke="#6a6420" stroke-width="0.95"/><rect x="9.6" y="28.0" width="4.9" height="4.1" rx="0.6" fill="none" stroke="#6a6420" stroke-width="0.75"/><rect x="-2.9" y="32.0" width="4.9" height="4.1" rx="0.6" fill="none" stroke="#6a6420" stroke-width="0.75"/><circle cx="68.0" cy="22.7" r="1.8" fill="none" stroke="#6a6420" stroke-width="0.75"/><circle cx="55.5" cy="26.7" r="1.2" fill="#6a6420"/><rect x="41.0" y="28.7" width="4.1" height="4.1" fill="#6a6420" opacity="0.8"/><path d="M28.1,36.3 L30.1,32.7 L32.9,36.6" fill="none" stroke="#6a6420" stroke-width="0.95"/><path d="M15.6,40.3 L17.6,36.7 L20.4,40.6" fill="none" stroke="#6a6420" stroke-width="0.95"/><rect x="3.1" y="40.7" width="4.9" height="4.1" rx="0.6" fill="none" stroke="#6a6420" stroke-width="0.75"/><path d="M71.6,33.0 L73.6,29.4 L76.4,33.3" fill="none" stroke="#6a6420" stroke-width="0.95"/><rect x="59.5" y="33.4" width="4.1" height="4.1" fill="#6a6420" opacity="0.8"/><circle cx="49.0" cy="39.4" r="1.8" fill="none" stroke="#6a6420" stroke-width="0.75"/><rect x="34.5" y="41.4" width="4.1" height="4.1" fill="#6a6420" opacity="0.8"/><circle cx="24.0" cy="47.4" r="1.2" fill="#6a6420"/><circle cx="11.5" cy="51.4" r="1.2" fill="#6a6420"/><rect x="77.6" y="38.1" width="4.9" height="4.1" rx="0.6" fill="none" stroke="#6a6420" stroke-width="0.75"/><circle cx="67.5" cy="44.1" r="1.8" fill="none" stroke="#6a6420" stroke-width="0.75"/><circle cx="55.0" cy="48.1" r="1.2" fill="#6a6420"/><circle cx="42.5" cy="52.1" r="1.2" fill="#6a6420"/><path d="M27.6,57.7 L29.6,54.1 L32.4,58.0" fill="none" stroke="#6a6420" stroke-width="0.95"/><circle cx="17.5" cy="60.1" r="1.2" fill="#6a6420"/><rect x="2.6" y="62.1" width="4.9" height="4.1" rx="0.6" fill="none" stroke="#6a6420" stroke-width="0.75"/><rect x="84.0" y="46.8" width="4.1" height="4.1" fill="#6a6420" opacity="0.8"/><path d="M71.1,54.4 L73.1,50.8 L75.9,54.7" fill="none" stroke="#6a6420" stroke-width="0.95"/><rect x="58.6" y="54.8" width="4.9" height="4.1" rx="0.6" fill="none" stroke="#6a6420" stroke-width="0.75"/><path d="M46.1,62.4 L48.1,58.8 L50.9,62.7" fill="none" stroke="#6a6420" stroke-width="0.95"/><rect x="34.0" y="62.8" width="4.1" height="4.1" fill="#6a6420" opacity="0.8"/><path d="M21.1,70.4 L23.1,66.8 L25.9,70.7" fill="none" stroke="#6a6420" stroke-width="0.95"/><rect x="9.0" y="70.8" width="4.1" height="4.1" fill="#6a6420" opacity="0.8"/><rect x="77.1" y="59.5" width="4.9" height="4.1" rx="0.6" fill="none" stroke="#6a6420" stroke-width="0.75"/><circle cx="67.0" cy="65.5" r="1.8" fill="none" stroke="#6a6420" stroke-width="0.75"/><path d="M52.1,71.1 L54.1,67.5 L56.9,71.4" fill="none" stroke="#6a6420" stroke-width="0.95"/><rect x="39.6" y="71.5" width="4.9" height="4.1" rx="0.6" fill="none" stroke="#6a6420" stroke-width="0.75"/><rect x="27.1" y="75.5" width="4.9" height="4.1" rx="0.6" fill="none" stroke="#6a6420" stroke-width="0.75"/><circle cx="17.0" cy="81.5" r="1.2" fill="#6a6420"/><circle cx="4.5" cy="85.5" r="1.8" fill="none" stroke="#6a6420" stroke-width="0.75"/><path d="M83.1,71.8 L85.1,68.2 L87.9,72.1" fill="none" stroke="#6a6420" stroke-width="0.95"/><rect x="71.0" y="72.2" width="4.1" height="4.1" fill="#6a6420" opacity="0.8"/><circle cx="60.5" cy="78.2" r="1.8" fill="none" stroke="#6a6420" stroke-width="0.75"/><circle cx="48.0" cy="82.2" r="1.2" fill="#6a6420"/><circle cx="35.5" cy="86.2" r="1.2" fill="#6a6420"/><circle cx="79.0" cy="82.9" r="1.2" fill="#6a6420"/><rect x="64.1" y="84.9" width="4.9" height="4.1" rx="0.6" fill="none" stroke="#6a6420" stroke-width="0.75"/></g></svg></div>
<div class="lbl" style="left:13.5px;top:395.10px">lcd-l.jxl</div>
<div class="thumb" style="left:162px;top:304.30px"><svg viewBox="0 0 87 87" preserveAspectRatio="none"><defs><filter id="lof" x="-20%" y="-20%" width="140%" height="140%"><feGaussianBlur stdDeviation="0.3"/></filter><radialGradient id="log1" gradientUnits="userSpaceOnUse" cx="50" cy="90" r="60"><stop offset="0" stop-color="#4c4450"/><stop offset="0.55" stop-color="#221e26"/><stop offset="1" stop-color="#08080a"/></radialGradient></defs><rect width="87" height="87" fill="url(#log1)"/><g filter="url(#lof)" opacity="0.95"><circle cx="28.5" cy="16.5" r="1.6" fill="none" stroke="#d4309c" stroke-width="0.95"/><path d="M36.5,21.7 L38.4,18.3 L41.0,21.9" fill="none" stroke="#e5283d" stroke-width="1.15"/><rect x="47.2" y="22.0" width="3.8" height="3.8" fill="#e95727" opacity="0.8"/><circle cx="59.4" cy="27.6" r="1.6" fill="none" stroke="#e98621" stroke-width="0.95"/><circle cx="69.7" cy="31.3" r="1.6" fill="none" stroke="#e6b326" stroke-width="0.95"/><rect x="77.8" y="33.1" width="4.5" height="3.8" rx="0.6" fill="none" stroke="#e6be28" stroke-width="0.95"/><rect x="21.1" y="24.1" width="4.5" height="3.8" rx="0.6" fill="none" stroke="#c334b6" stroke-width="0.95"/><circle cx="33.7" cy="29.7" r="1.6" fill="none" stroke="#dd2c6c" stroke-width="0.95"/><circle cx="44.0" cy="33.4" r="1.6" fill="none" stroke="#e73f32" stroke-width="0.95"/><circle cx="54.3" cy="37.1" r="1.1" fill="#ea6f1e"/><circle cx="64.6" cy="40.8" r="1.6" fill="none" stroke="#e89d23" stroke-width="0.95"/><rect x="73.0" y="42.6" width="3.8" height="3.8" fill="#e6be28" opacity="0.8"/><rect x="83.0" y="46.3" width="4.5" height="3.8" rx="0.6" fill="none" stroke="#e6be28" stroke-width="0.95"/><rect x="16.4" y="33.6" width="3.8" height="3.8" fill="#af37c7" opacity="0.8"/><rect x="26.7" y="37.3" width="3.8" height="3.8" fill="#d4309b" opacity="0.8"/><rect x="37.0" y="41.0" width="3.8" height="3.8" fill="#e5283c" opacity="0.8"/><rect x="47.3" y="44.7" width="3.8" height="3.8" fill="#e95727" opacity="0.8"/><rect x="57.6" y="48.4" width="3.8" height="3.8" fill="#e98621" opacity="0.8"/><circle cx="69.8" cy="54.0" r="1.1" fill="#e6b426"/><circle cx="80.1" cy="57.7" r="1.6" fill="none" stroke="#e6be28" stroke-width="0.95"/><rect x="11.3" y="43.1" width="3.8" height="3.8" fill="#9a3bd8" opacity="0.8"/><rect x="21.2" y="46.8" width="4.5" height="3.8" rx="0.6" fill="none" stroke="#c434b5" stroke-width="0.95"/><rect x="31.9" y="50.5" width="3.8" height="3.8" fill="#dd2c6b" opacity="0.8"/><circle cx="44.1" cy="56.1" r="1.6" fill="none" stroke="#e73f31" stroke-width="0.95"/><rect x="52.2" y="57.9" width="4.5" height="3.8" rx="0.6" fill="none" stroke="#ea6f1e" stroke-width="0.95"/><path d="M62.5,65.0 L64.3,61.6 L67.0,65.2" fill="none" stroke="#e89d23" stroke-width="1.15"/><circle cx="75.0" cy="67.2" r="1.1" fill="#e6be28"/><rect x="83.4" y="69.0" width="3.8" height="3.8" fill="#e6be28" opacity="0.8"/><rect x="6.2" y="52.6" width="3.8" height="3.8" fill="#963cdc" opacity="0.8"/><rect x="16.5" y="56.3" width="3.8" height="3.8" fill="#af37c6" opacity="0.8"/><rect x="26.5" y="60.0" width="4.5" height="3.8" rx="0.6" fill="none" stroke="#d4309a" stroke-width="0.95"/><path d="M36.8,67.1 L38.6,63.7 L41.2,67.3" fill="none" stroke="#e6283c" stroke-width="1.15"/><rect x="47.1" y="67.4" width="4.5" height="3.8" rx="0.6" fill="none" stroke="#e95827" stroke-width="0.95"/><rect x="57.4" y="71.1" width="4.5" height="3.8" rx="0.6" fill="none" stroke="#e98621" stroke-width="0.95"/><rect x="68.0" y="74.8" width="3.8" height="3.8" fill="#e6b426" opacity="0.8"/><circle cx="80.2" cy="80.4" r="1.1" fill="#e6be28"/><rect x="1.1" y="62.1" width="3.8" height="3.8" fill="#963cdc" opacity="0.8"/><rect x="11.1" y="65.8" width="4.5" height="3.8" rx="0.6" fill="none" stroke="#9b3bd7" stroke-width="0.95"/><rect x="21.4" y="69.5" width="4.5" height="3.8" rx="0.6" fill="none" stroke="#c434b5" stroke-width="0.95"/><path d="M31.7,76.6 L33.5,73.2 L36.2,76.8" fill="none" stroke="#dd2c6a" stroke-width="1.15"/><circle cx="44.2" cy="78.8" r="1.6" fill="none" stroke="#e74031" stroke-width="0.95"/><rect x="52.2" y="80.6" width="4.5" height="3.8" rx="0.6" fill="none" stroke="#ea701e" stroke-width="0.95"/><rect x="62.9" y="84.3" width="3.8" height="3.8" fill="#e89e24" opacity="0.8"/><circle cx="8.2" cy="77.2" r="1.1" fill="#963cdc"/><circle cx="18.5" cy="80.9" r="1.6" fill="none" stroke="#b037c6" stroke-width="0.95"/><circle cx="28.8" cy="84.6" r="1.1" fill="#d53099"/><circle cx="3.1" cy="86.7" r="1.6" fill="none" stroke="#963cdc" stroke-width="0.95"/></g></svg></div>
<div class="lbl" style="left:145.5px;top:395.10px">lcd-o.jxl</div>
<div class="thumb" style="left:294px;top:304.30px"><svg viewBox="0 0 87 87" preserveAspectRatio="none"><defs><filter id="lwf" x="-20%" y="-20%" width="140%" height="140%"><feGaussianBlur stdDeviation="0.4"/></filter><linearGradient id="lwg1" x1="0" y1="0" x2="1" y2="1"><stop offset="0" stop-color="#cbcbcd"/><stop offset="1" stop-color="#f2f2f2"/></linearGradient></defs><rect width="87" height="87" fill="url(#lwg1)"/><g filter="url(#lwf)" opacity="0.5"><circle cx="28.5" cy="16.5" r="1.6" fill="none" stroke="#d4309c" stroke-width="0.8"/><path d="M36.6,21.6 L38.4,18.4 L41.0,21.9" fill="none" stroke="#e5283d" stroke-width="1.0"/><rect x="47.3" y="22.1" width="3.6" height="3.6" fill="#e95727" opacity="0.8"/><circle cx="59.4" cy="27.6" r="1.6" fill="none" stroke="#e98621" stroke-width="0.8"/><circle cx="69.7" cy="31.3" r="1.6" fill="none" stroke="#e6b326" stroke-width="0.8"/><rect x="77.8" y="33.2" width="4.3" height="3.6" rx="0.6" fill="none" stroke="#e6be28" stroke-width="0.8"/><rect x="21.2" y="24.2" width="4.3" height="3.6" rx="0.6" fill="none" stroke="#c334b6" stroke-width="0.8"/><circle cx="33.7" cy="29.7" r="1.6" fill="none" stroke="#dd2c6c" stroke-width="0.8"/><circle cx="44.0" cy="33.4" r="1.6" fill="none" stroke="#e73f32" stroke-width="0.8"/><circle cx="54.3" cy="37.1" r="1.1" fill="#ea6f1e"/><circle cx="64.6" cy="40.8" r="1.6" fill="none" stroke="#e89d23" stroke-width="0.8"/><rect x="73.1" y="42.7" width="3.6" height="3.6" fill="#e6be28" opacity="0.8"/><rect x="83.0" y="46.4" width="4.3" height="3.6" rx="0.6" fill="none" stroke="#e6be28" stroke-width="0.8"/><rect x="16.5" y="33.7" width="3.6" height="3.6" fill="#af37c7" opacity="0.8"/><rect x="26.8" y="37.4" width="3.6" height="3.6" fill="#d4309b" opacity="0.8"/><rect x="37.1" y="41.1" width="3.6" height="3.6" fill="#e5283c" opacity="0.8"/><rect x="47.4" y="44.8" width="3.6" height="3.6" fill="#e95727" opacity="0.8"/><rect x="57.7" y="48.5" width="3.6" height="3.6" fill="#e98621" opacity="0.8"/><circle cx="69.8" cy="54.0" r="1.1" fill="#e6b426"/><circle cx="80.1" cy="57.7" r="1.6" fill="none" stroke="#e6be28" stroke-width="0.8"/><rect x="11.4" y="43.2" width="3.6" height="3.6" fill="#9a3bd8" opacity="0.8"/><rect x="21.3" y="46.9" width="4.3" height="3.6" rx="0.6" fill="none" stroke="#c434b5" stroke-width="0.8"/><rect x="32.0" y="50.6" width="3.6" height="3.6" fill="#dd2c6b" opacity="0.8"/><circle cx="44.1" cy="56.1" r="1.6" fill="none" stroke="#e73f31" stroke-width="0.8"/><rect x="52.2" y="58.0" width="4.3" height="3.6" rx="0.6" fill="none" stroke="#ea6f1e" stroke-width="0.8"/><path d="M62.5,64.9 L64.3,61.7 L66.9,65.2" fill="none" stroke="#e89d23" stroke-width="1.0"/><circle cx="75.0" cy="67.2" r="1.1" fill="#e6be28"/><rect x="83.5" y="69.1" width="3.6" height="3.6" fill="#e6be28" opacity="0.8"/><rect x="6.3" y="52.7" width="3.6" height="3.6" fill="#963cdc" opacity="0.8"/><rect x="16.6" y="56.4" width="3.6" height="3.6" fill="#af37c6" opacity="0.8"/><rect x="26.5" y="60.1" width="4.3" height="3.6" rx="0.6" fill="none" stroke="#d4309a" stroke-width="0.8"/><path d="M36.8,67.0 L38.6,63.8 L41.2,67.3" fill="none" stroke="#e6283c" stroke-width="1.0"/><rect x="47.1" y="67.5" width="4.3" height="3.6" rx="0.6" fill="none" stroke="#e95827" stroke-width="0.8"/><rect x="57.4" y="71.2" width="4.3" height="3.6" rx="0.6" fill="none" stroke="#e98621" stroke-width="0.8"/><rect x="68.1" y="74.9" width="3.6" height="3.6" fill="#e6b426" opacity="0.8"/><circle cx="80.2" cy="80.4" r="1.1" fill="#e6be28"/><rect x="1.2" y="62.2" width="3.6" height="3.6" fill="#963cdc" opacity="0.8"/><rect x="11.1" y="65.9" width="4.3" height="3.6" rx="0.6" fill="none" stroke="#9b3bd7" stroke-width="0.8"/><rect x="21.4" y="69.6" width="4.3" height="3.6" rx="0.6" fill="none" stroke="#c434b5" stroke-width="0.8"/><path d="M31.7,76.5 L33.5,73.3 L36.1,76.8" fill="none" stroke="#dd2c6a" stroke-width="1.0"/><circle cx="44.2" cy="78.8" r="1.6" fill="none" stroke="#e74031" stroke-width="0.8"/><rect x="52.3" y="80.7" width="4.3" height="3.6" rx="0.6" fill="none" stroke="#ea701e" stroke-width="0.8"/><rect x="63.0" y="84.4" width="3.6" height="3.6" fill="#e89e24" opacity="0.8"/><circle cx="8.2" cy="77.2" r="1.1" fill="#963cdc"/><circle cx="18.5" cy="80.9" r="1.6" fill="none" stroke="#b037c6" stroke-width="0.8"/><circle cx="28.8" cy="84.6" r="1.1" fill="#d53099"/><circle cx="3.1" cy="86.7" r="1.6" fill="none" stroke="#963cdc" stroke-width="0.8"/></g></svg></div>
<div class="lbl" style="left:277.5px;top:395.10px">lcd-w.jxl</div>
    </div>
    <div class="abs" style="left:307px;top:344.4px;width:102px;height:13.6px;border-radius:7px;background:rgba(244,244,244,0.94);box-shadow:0 0 0 0.5px rgba(0,0,0,0.06);z-index:6"></div>
    <div class="t" style="left:312.5px;top:346.9px;z-index:7;font-size:8.3px;letter-spacing:-0.19px;color:#202024;-webkit-text-stroke:0.2px #202024">4 items selected&nbsp; (1.0 MB)</div>
  </div>
</div>
</body></html>
